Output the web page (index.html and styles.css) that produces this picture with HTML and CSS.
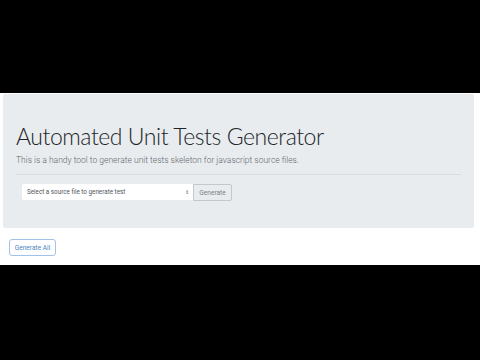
FILE: index.html
```html
<!DOCTYPE html>
<html lang="en">
<head>
  <meta charset="UTF-8">
  <title>Automated Unit Tests Generator</title>
  <link rel="stylesheet" href="styles.css">
</head>
<body>
  <div class="page">
    <div class="jumbotron">
      <h1>Automated Unit Tests Generator</h1>
      <p class="lead">This is a handy tool to generate unit tests skeleton for javascript source files.</p>
      <hr>
      <div class="form-row">
        <div class="select">
          <span>Select a source file to generate test</span>
          <span class="arrows">&#8661;</span>
        </div>
        <button class="btn-gen">Generate</button>
      </div>
    </div>
    <button class="btn-all">Generate All</button>
  </div>
</body>
</html>
```

FILE: styles.css
```css
body { margin: 0; background: #000; font-family: Roboto, "Open Sans", sans-serif; }
.page {
  margin-top: 93px;
  height: 172px;
  background: #fff;
  padding: 1px 6px 0 3px;
  box-sizing: border-box;
}
.jumbotron {
  background: #e9ecef;
  border-radius: 2px;
  height: 134px;
  padding: 26px 13px 0 13px;
  box-sizing: border-box;
}
h1 {
  margin: 0;
  font-family: Lato, Roboto, sans-serif;
  font-weight: 300;
  font-size: 23px;
  letter-spacing: -0.45px;
  line-height: 32px;
  color: #212529;
}
.lead {
  margin: 3px 0 0;
  font-size: 8.5px;
  font-weight: 300;
  color: #5f666d;
}
hr {
  margin: 9px 0 0;
  border: 0;
  border-top: 1px solid #d9dde1;
}
.form-row {
  display: flex;
  margin: 9px 0 0 6px;
}
.select {
  width: 171px;
  height: 16px;
  background: #fff;
  border-radius: 2px 0 0 2px;
  display: flex;
  align-items: center;
  justify-content: space-between;
  padding: 0 4px 0 5px;
  box-sizing: border-box;
  font-size: 6.3px;
  color: #50565c;
}
.arrows { font-size: 5px; color: #666; }
.btn-gen {
  height: 17px;
  width: 39px;
  padding: 0;
  border: 1px solid #c3c8cd;
  border-radius: 0 2px 2px 0;
  background: #e9ecef;
  font-family: inherit;
  font-size: 6.6px;
  color: #7a8087;
}
.btn-all {
  display: block;
  margin: 11px 0 0 6px;
  height: 17px;
  width: 47px;
  padding: 0;
  background: #fff;
  border: 1px solid #9fc3e7;
  border-radius: 3px;
  font-family: inherit;
  font-size: 6.6px;
  color: #4a86c5;
}
```
